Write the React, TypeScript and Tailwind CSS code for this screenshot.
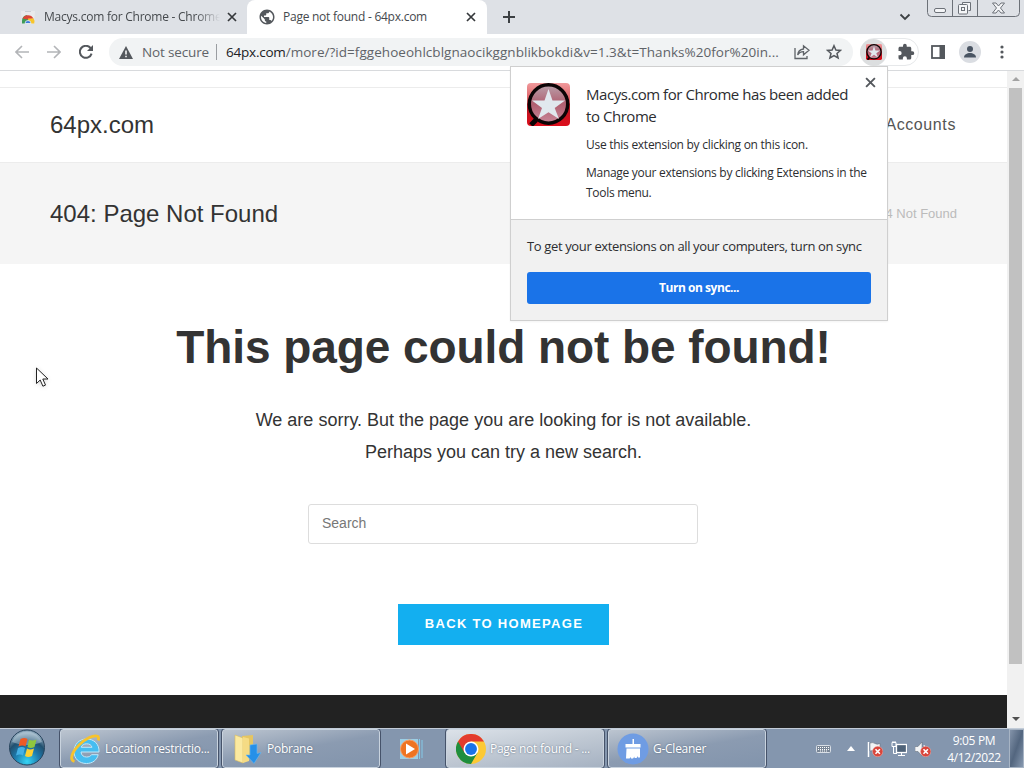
import React from "react";

const uiFont = "font-['Open_Sans','Noto_Sans',sans-serif]";
const pageFont = "font-['Liberation_Sans',Arial,sans-serif]";

function CloseIcon({ className }: { className: string }) {
  return (
    <svg className={className} viewBox="0 0 10 10" fill="none" stroke="currentColor">
      <path d="M1 1l8 8M9 1L1 9" strokeWidth="1.7" />
    </svg>
  );
}

function StoreIcon() {
  return (
    <svg className="h-4 w-4" viewBox="0 0 16 16">
      <path d="M1 2h14l-1 12.500H2z" fill="#e9eaec" />
      <path d="M5 2.500h6" stroke="#c9cdd2" />
      <path d="M2 14.500V12a6 6 0 0 1 5-6l2 5-3 3.500z" fill="#3f9b57" />
      <path d="M2.500 9.500A6.200 6.200 0 0 1 13.500 9.500L8 10.500z" fill="#dc4437" />
      <path d="M8 9.500h5.700a6 6 0 0 1 .5 5H9z" fill="#f7c52c" />
      <path d="M5 14.500a3 3 0 0 1 6 0z" fill="#3c78d8" stroke="#fff" strokeWidth=".7" />
    </svg>
  );
}

function GlobeIcon() {
  return (
    <svg className="h-[18px] w-[18px]" viewBox="0 0 24 24" fill="#54585d">
      <path d="M12 2C6.480 2 2 6.480 2 12s4.480 10 10 10 10-4.480 10-10S17.520 2 12 2zm-1 17.930c-3.950-.490-7-3.850-7-7.930 0-.620.080-1.210.210-1.790L9 15v1c0 1.100.900 2 2 2v1.930zm6.900-2.540c-.260-.810-1-1.390-1.900-1.390h-1v-3c0-.550-.450-1-1-1H8v-2h2c.550 0 1-.450 1-1V7h2c1.100 0 2-.900 2-2v-.410c2.930 1.190 5 4.060 5 7.410 0 2.080-.800 3.970-2.100 5.390z" />
    </svg>
  );
}

function MacysIcon({ className }: { className: string }) {
  return (
    <svg className={className} viewBox="0 0 43 43">
      <defs>
        <linearGradient id="macysRed" x1="0" y1="0" x2="0" y2="1">
          <stop offset="0" stopColor="#f09a9c" />
          <stop offset=".45" stopColor="#d9555b" />
          <stop offset=".5" stopColor="#b51823" />
          <stop offset="1" stopColor="#dd0d1b" />
        </linearGradient>
        <linearGradient id="macysLens" x1="0" y1="0" x2="0" y2="1">
          <stop offset="0" stopColor="#b9a0aa" />
          <stop offset=".5" stopColor="#b05f70" />
          <stop offset="1" stopColor="#c98799" />
        </linearGradient>
      </defs>
      <rect width="43" height="43" rx="4" fill="url(#macysRed)" />
      <path d="M4 42l5-5" stroke="#0b0405" strokeWidth="5" />
      <circle cx="21.500" cy="21" r="19.200" fill="url(#macysLens)" stroke="#0b0405" strokeWidth="3.400" />
      <path d="M21.500 6l4 11.500H38l-10.300 7.500 4.300 11-10.500-6.800L11 36l4-11L5 17.500h12.500z" fill="#e1e8ee" />
    </svg>
  );
}

function TabStrip() {
  return (
    <div className="flex h-[34px] bg-[#dee1e6] text-xs text-[#45494d]">
      <div className="flex w-[247px] items-center pl-5">
        <StoreIcon />
        <span className="ml-2 w-[176px] whitespace-nowrap tracking-[-0.24px] [mask-image:linear-gradient(to_right,black_86%,transparent)]">
          Macys.com for Chrome - Chrome
        </span>
        <CloseIcon className="ml-[7px] h-[10px] w-[10px] text-[#35383b]" />
      </div>
      <div className="flex w-[240px] items-center rounded-t-lg bg-white pl-[11px]">
        <GlobeIcon />
        <span className="ml-[7px] w-[180px] whitespace-nowrap tracking-[-0.25px]">Page not found - 64px.com</span>
        <CloseIcon className="ml-[3px] h-[10px] w-[10px] text-[#35383b]" />
      </div>
      <svg className="mt-[11px] ml-4 h-3 w-3" viewBox="0 0 12 12" stroke="#3c4043" strokeWidth="2">
        <path d="M6 0v12M0 6h12" />
      </svg>
      <svg className="mt-[13px] ml-auto h-2 w-3" viewBox="0 0 12 8" fill="none" stroke="#3c4043" strokeWidth="1.800">
        <path d="M1.500 1.500L6 6l4.500-4.500" />
      </svg>
      <WindowButtons />
    </div>
  );
}

function WindowButtons() {
  return (
    <svg className="mr-[4px] ml-[16px] h-[17px] w-[93px]" viewBox="0 0 93 17" fill="none" stroke="#6c7178">
      <path d="M.5 0v12.500a4 4 0 0 0 4 4h84a4 4 0 0 0 4-4V0M25.500 0v16.500M50.500 0v16.500" />
      <rect x="7.500" y="8.500" width="11" height="4" rx="1.500" fill="#f4f5f7" />
      <path d="M35.500 4.500v-2h8v8h-2" fill="#f4f5f7" />
      <rect x="31.500" y="4.500" width="9" height="9.500" rx="1" fill="#f4f5f7" />
      <rect x="34.500" y="7.500" width="3" height="3" />
      <path d="M65.500 3h3.500l2.500 3 2.500-3h3.500l-4 5 4 5H74l-2.500-3-2.500 3h-3.500l4-5z" fill="#f4f5f7" />
    </svg>
  );
}

function Toolbar() {
  return (
    <div className="flex h-[37px] items-center border-b border-[#d8dadd] bg-white text-[#5f6368]">
      <svg className="ml-[15px] h-[14px] w-[14px]" viewBox="0 0 14 14" fill="none" stroke="#b3b5b8" strokeWidth="1.600">
        <path d="M14 7H1.500M7 1L1 7l6 6" />
      </svg>
      <svg className="ml-[18px] h-[14px] w-[14px]" viewBox="0 0 14 14" fill="none" stroke="#b3b5b8" strokeWidth="1.600">
        <path d="M0 7h12.500M7 1l6 6-6 6" />
      </svg>
      <svg className="ml-[18px] h-[14px] w-[14px]" viewBox="0 0 14 14" fill="none" stroke="#54585d" strokeWidth="2">
        <path d="M12.600 8.600A6 6 0 1 1 11.500 3L13 4.700" />
        <path d="M14 0v6H8z" fill="#54585d" stroke="none" />
      </svg>
      <div className="ml-[16px] flex h-[28px] w-[744px] items-center rounded-full bg-[#f1f3f4] pl-[10px] text-[13.500px]">
        <svg className="h-[13px] w-[14px] shrink-0" viewBox="0 0 14 13">
          <path d="M7 0l7 13H0z" fill="#54585d" />
          <path d="M7 4.500v4M7 9.700v1.600" stroke="#fff" strokeWidth="1.500" />
        </svg>
        <span className="ml-[9px] w-[68px] whitespace-nowrap tracking-[-0.15px]">Not secure</span>
        <span className="ml-[6px] h-4 w-px bg-[#9a9da1]" />
        <span className="ml-[9px] w-[558px] whitespace-nowrap tracking-[0.04px]">
          <span className="tracking-[-0.22px] text-[#202124]">64px.com</span>/more/?id=fggehoeohlcblgnaocikggnblikbokdi&amp;v=1.3&amp;t=Thanks%20for%20in...
        </span>
        <svg className="ml-[10px] h-4 w-4 shrink-0" viewBox="0 0 16 16" fill="none" stroke="#5f6368" strokeWidth="1.300">
          <path d="M1 4v10.500h12V12" />
          <path d="M9.500 5V1.800L15 6.300l-5.500 4.500V7.700C7 7.700 5 8.700 3.700 11c.3-3.500 2.500-5.500 5.800-6z" />
        </svg>
        <svg className="ml-4 h-4 w-4 shrink-0" viewBox="0 0 16 16" fill="none" stroke="#54585d" strokeWidth="1.500">
          <path d="M8 1.700l1.900 4.300 4.600.400-3.500 3.100 1.100 4.500L8 11.600 3.900 14 5 9.500 1.500 6.400 6.100 6z" />
        </svg>
      </div>
      <div className="ml-[7px] flex h-[28px] w-[59px] items-center rounded-full border border-[#e6e8ea]">
        <div className="-ml-px flex h-[27px] w-[27px] items-center justify-center rounded-full bg-[#dcdedf]">
          <MacysIcon className="h-4 w-4" />
        </div>
        <svg className="ml-[10px] h-[18px] w-[18px]" viewBox="0 0 24 24" fill="#54585d">
          <path d="M20.500 11H19V7c0-1.100-.900-2-2-2h-4V3.500a2.500 2.500 0 0 0-5 0V5H4c-1.100 0-2 .900-2 2v3.800h1.500a2.700 2.700 0 0 1 0 5.400H2V20c0 1.100.900 2 2 2h3.800v-1.500a2.700 2.700 0 0 1 5.400 0V22H17c1.100 0 2-.900 2-2v-4h1.500a2.500 2.500 0 0 0 0-5z" />
        </svg>
      </div>
      <svg className="ml-[12px] h-[14px] w-[14px]" viewBox="0 0 14 14">
        <rect x="1" y="1" width="12" height="12" fill="none" stroke="#54585d" strokeWidth="1.800" />
        <path d="M8.500 0H14v14H8.500z" fill="#54585d" />
      </svg>
      <svg className="ml-[14px] h-[22px] w-[22px]" viewBox="0 0 22 22">
        <circle cx="11" cy="11" r="11" fill="#dadde2" />
        <g fill="#4a5563">
          <circle cx="11" cy="8" r="3" />
          <path d="M5 16.500c0-3 3-4.500 6-4.500s6 1.500 6 4.500z" />
        </g>
      </svg>
      <svg className="ml-[19px] h-[14px] w-1" viewBox="0 0 4 14" fill="#54585d">
        <circle cx="2" cy="2" r="1.600" />
        <circle cx="2" cy="7" r="1.600" />
        <circle cx="2" cy="12" r="1.600" />
      </svg>
    </div>
  );
}

function Page() {
  return (
    <div className={`flex w-[1007px] flex-col bg-white text-[#333] ${pageFont}`}>
      <div className="h-[17px] border-b border-[#ececec]" />
      <header className="flex h-[75px] items-center justify-between border-b border-[#ececec] pr-[51px] pl-[50px]">
        <span className="text-2xl">64px.com</span>
        <span className="text-base tracking-[0.6px] text-[#555]">Accounts</span>
      </header>
      <div className="flex h-[101px] items-center justify-between bg-[#f5f5f5] pr-[50px] pl-[50px]">
        <h1 className="text-2xl">404: Page Not Found</h1>
        <span className="text-[13px] text-[#bbb]">404 Not Found</span>
      </div>
      <main className="flex h-[431px] flex-col items-center">
        <h2 className="mt-[56px] text-[46px] leading-[54px] font-bold tracking-[-0.07px] whitespace-nowrap">
          This page could not be found!
        </h2>
        <p className="mt-[30px] text-center text-lg leading-8">
          We are sorry. But the page you are looking for is not available.
          <br />
          Perhaps you can try a new search.
        </p>
        <div className="mt-[36px] mr-px flex h-[40px] w-[390px] items-center rounded-[3px] border border-[#ddd] pl-[13px] text-sm text-[#777]">
          <span className="-mt-0.5">Search</span>
        </div>
        <button className="mt-[60px] h-[41px] w-[211px] bg-[#13aff0] pb-px pl-px text-[13px] font-bold tracking-[1.3px] whitespace-nowrap text-white">
          BACK TO HOMEPAGE
        </button>
      </main>
      <footer className="flex-1 bg-[#222]" />
    </div>
  );
}

function Scrollbar() {
  return (
    <div className="flex w-[17px] flex-col items-center bg-[#f1f1f1]">
      <svg className="mt-[6px] h-1 w-2" viewBox="0 0 8 4">
        <path d="M4 0l4 4H0z" fill="#a3a3a3" />
      </svg>
      <div className="mt-[7px] h-[576px] w-[13px] bg-[#c1c1c1]" />
      <svg className="mt-auto mb-[7px] h-1 w-2" viewBox="0 0 8 4">
        <path d="M0 0h8L4 4z" fill="#505050" />
      </svg>
    </div>
  );
}

function ExtensionPopup() {
  return (
    <div className="absolute top-[66px] left-[510px] h-[255px] w-[378px] border border-[#cfcfcf] bg-white text-[#2c2d30] shadow-xs">
      <div className="flex h-[152px] pt-4 pl-4">
        <MacysIcon className="h-[43px] w-[43px] shrink-0" />
        <div className="ml-4 text-xs leading-5 whitespace-nowrap">
          <h3 className="text-[15px] leading-[22px] tracking-[-0.45px]">
            Macys.com for Chrome has been added
            <br />
            to Chrome
          </h3>
          <p className="mt-2 tracking-[-0.27px]">Use this extension by clicking on this icon.</p>
          <p className="mt-2 tracking-[-0.29px]">
            Manage your extensions by clicking Extensions in the
            <br />
            Tools menu.
          </p>
        </div>
      </div>
      <CloseIcon className="absolute top-[10px] right-[11px] h-[11px] w-[11px] text-[#54585d]" />
      <div className="h-[101px] border-t border-[#cfcfcf] bg-[#f1f1f1] px-4 pt-4">
        <p className="text-[13px] leading-5 tracking-[-0.36px] whitespace-nowrap">
          To get your extensions on all your computers, turn on sync
        </p>
        <button className="mt-4 h-8 w-full rounded-[3px] bg-[#1a73e8] text-xs font-bold tracking-[-0.45px] text-white">
          Turn on sync...
        </button>
      </div>
    </div>
  );
}

function StartOrb() {
  return (
    <svg className="ml-[8px] h-[37px] w-[38px]" viewBox="0 0 38 37">
      <defs>
        <radialGradient id="orb" cx=".5" cy=".9" r=".8">
          <stop offset="0" stopColor="#35d5f5" />
          <stop offset=".45" stopColor="#1d79ab" />
          <stop offset=".75" stopColor="#21506f" />
          <stop offset="1" stopColor="#88a4b8" />
        </radialGradient>
      </defs>
      <circle cx="19" cy="18.500" r="17.500" fill="url(#orb)" stroke="#28445d" />
      <path d="M4 13a16 16 0 0 1 30 0c-9 4-20 4-30 0z" fill="#d5e3ed" opacity=".4" />
      <path d="M12.500 10q4-2 7 0l-2 7.500q-3-2-7 0z" fill="#ef5a24" />
      <path d="M21 10.500q3 2 7.500 0l-2 7.500q-4 2-7 0z" fill="#8fc73e" />
      <path d="M10 19q4-2 7 0l-2 7.500q-3-2-7 0z" fill="#45b1e5" />
      <path d="M19 19.500q3 2 7 0l-2 7.500q-4 2-7 0z" fill="#fcd133" />
    </svg>
  );
}

function ExplorerIcon() {
  return (
    <svg className="h-8 w-8" viewBox="0 0 32 32" fill="none">
      <path d="M30 19H12c.3 3.300 2.500 5 5.500 5 2.300 0 4-.700 5-2.300h6.700C28 27 23.500 30.500 17.500 30.500 10 30.500 5 25.500 5 18.500S10 6 17.500 6 30.500 11 30 19zm-7-4.700c-.5-2.300-2.700-3.500-5.300-3.500-2.700 0-4.900 1.200-5.500 3.500z" fill="#46bdf0" stroke="#bfe8fa" />
      <path d="M5.500 28.500C0 27 3 19 10 12 16.500 5.500 25 1.500 28.500 3.200c1.500 1 1.300 2.600.700 4.300" stroke="#f7c32d" strokeWidth="2.800" />
    </svg>
  );
}

function DownloadsIcon() {
  return (
    <svg className="h-8 w-8" viewBox="0 0 32 32">
      <path d="M11 3l11-1v24l-11 1z" fill="#e5c562" />
      <path d="M4 2l8 3v25l-8-3z" fill="#fbe9a0" stroke="#dcbe5c" strokeWidth=".6" />
      <path d="M12 4l6 1.500V28l-6 2z" fill="#f5db84" />
      <path d="M19 12l7-1v9.500l4-1-7 11-8-8.500 4 0z" fill="#2690e8" stroke="#68bbf5" strokeWidth=".6" />
    </svg>
  );
}

function PlayerIcon() {
  return (
    <svg className="h-6 w-6" viewBox="0 0 24 24">
      <path d="M1 2h18v20H1z" fill="#9bcfe6" />
      <path d="M20.500 2v20M23 3v18" stroke="#83c9e8" />
      <circle cx="10.500" cy="12" r="9" fill="#ee7421" stroke="#f5a068" />
      <path d="M7 6.500l9 5.500-9 5.500z" fill="#fff" />
    </svg>
  );
}

function ChromeIcon() {
  return (
    <svg className="h-[30px] w-[30px]" viewBox="0 0 48 48">
      <circle cx="24" cy="24" r="24" fill="#fcc934" />
      <path d="M3.200 12A24 24 0 0 0 24 48l10.400-18L24 24z" fill="#1e8e3e" />
      <path d="M3.200 12A24 24 0 0 1 44.800 12H24L13.600 30z" fill="#e33b2e" />
      <circle cx="24" cy="24" r="12" fill="#fff" />
      <circle cx="24" cy="24" r="9.500" fill="#1a73e8" />
    </svg>
  );
}

function CleanerIcon() {
  return (
    <svg className="h-8 w-8" viewBox="0 0 32 32">
      <circle cx="16" cy="16" r="15.500" fill="#6f9ce3" />
      <path d="M15.500 6h1.500v5h6.500v3.500h-15V11h7zM9.500 15.500h13.500v9h-2v-1.500l-1.500 2h-2v-1.500l-1.500 2h-2v-1.500l-1.500 1.500H9z" fill="#fff" />
    </svg>
  );
}

type TaskButtonProps = {
  className: string;
  label: string;
  children: React.ReactNode;
};

function TaskButton({ className, label, children }: TaskButtonProps) {
  return (
    <div
      className={`flex h-[39px] items-center rounded-[3px] border border-[#c9d3de] text-xs whitespace-nowrap text-white outline outline-[#46536a] ${className}`}
    >
      {children}
      <span className="ml-[4px] tracking-[-0.26px] [text-shadow:0_0_2px_#55657a]">{label}</span>
    </div>
  );
}

function Taskbar() {
  const normal = "bg-linear-[170deg] from-[#bcc5d0] via-[#8b9bb1] via-50% to-[#8294ac]";
  return (
    <div className="flex h-[40px] items-start overflow-hidden border-t border-[#c2ccd8] bg-[#8496ae]">
      <StartOrb />
      <TaskButton className={`ml-[14px] w-[158px] pl-[8px] ${normal}`} label="Location restrictio...">
        <ExplorerIcon />
      </TaskButton>
      <TaskButton className={`ml-[4px] w-[158px] pl-[8px] ${normal}`} label="Pobrane">
        <DownloadsIcon />
      </TaskButton>
      <div className="flex h-[39px] w-[66px] items-center pl-[19px]">
        <PlayerIcon />
      </div>
      <TaskButton
        className="w-[158px] bg-linear-[170deg] from-[#dce2e9] via-[#bfc8d3] via-50% to-[#a6b2c2] pl-[9px]"
        label="Page not found - ..."
      >
        <ChromeIcon />
      </TaskButton>
      <TaskButton className={`ml-[4px] w-[158px] pl-[8px] ${normal}`} label="G-Cleaner">
        <CleanerIcon />
      </TaskButton>
      <Tray />
    </div>
  );
}

function Tray() {
  return (
    <div className="ml-auto flex h-full items-center text-white">
      <svg className="h-2 w-[15px]" viewBox="0 0 15 8">
        <rect x=".5" y=".5" width="14" height="7" rx="1" fill="#7a8797" stroke="#d9dfe6" />
        <path d="M2 2.500h11M2 4.500h11M4 6h7" stroke="#fff" strokeDasharray="1 1" />
      </svg>
      <svg className="ml-[16px] h-[5px] w-2" viewBox="0 0 8 5">
        <path d="M4 0l4 5H0z" fill="#fff" />
      </svg>
      <svg className="ml-[12px] h-4 w-4" viewBox="0 0 16 16">
        <path d="M1.500 1v15" stroke="#fff" strokeWidth="1.500" />
        <path d="M3 2q3-1 5 .5t5 0V10q-3 1-5 0T3 10z" fill="#f1f3f5" stroke="#5c6673" strokeWidth=".5" />
        <ErrorBadge />
      </svg>
      <svg className="ml-[8px] h-4 w-4" viewBox="0 0 16 16" fill="none" stroke="#fff">
        <rect x="5.500" y="3.500" width="10" height="8" fill="#4f6379" strokeWidth="1.300" />
        <path d="M1 1.500h4v4H1zM2.500 5.500v7H6M7 14.500h7M10.500 12v2M2 0v2M4 0v2" />
      </svg>
      <svg className="ml-[8px] h-4 w-4" viewBox="0 0 16 16">
        <path d="M0 5.500h3L7 1v14L3 10.500H0z" fill="#f2f4f6" stroke="#5c6673" strokeWidth=".5" />
        <path d="M9 4q2 3 0 7" fill="none" stroke="#fff" />
        <ErrorBadge />
      </svg>
      <div className="ml-[14px] w-[58px] text-center text-xs leading-[17px] tracking-[-0.35px] whitespace-nowrap">
        <div>9:05 PM</div>
        <div>4/12/2022</div>
      </div>
      <div className="ml-[6px] h-full w-[15px] border border-[#a7b4c4] bg-linear-to-br from-[#8494aa] via-[#53667f] to-[#8799b0]" />
    </div>
  );
}

function ErrorBadge() {
  return (
    <g>
      <circle cx="10.700" cy="10.500" r="5.200" fill="#d9453b" stroke="#f3b9b3" strokeWidth=".5" />
      <path d="M8.500 8.300l4.400 4.400M12.900 8.300l-4.400 4.400" stroke="#fff" strokeWidth="1.600" />
    </g>
  );
}

function MouseCursor() {
  return (
    <svg className="absolute top-[367px] left-[36px] h-[21px] w-[14px] drop-shadow-sm" viewBox="0 0 14 21">
      <path d="M.5 1v15.500l3.700-3.500 2.700 6.200 2.600-1.100L6.800 12H12z" fill="#fff" stroke="#222" />
    </svg>
  );
}

export default function App() {
  return (
    <div className={`relative flex h-[768px] w-[1024px] flex-col overflow-hidden bg-white ${uiFont}`}>
      <TabStrip />
      <Toolbar />
      <div className="flex h-[657px]">
        <Page />
        <Scrollbar />
      </div>
      <Taskbar />
      <ExtensionPopup />
      <MouseCursor />
    </div>
  );
}
